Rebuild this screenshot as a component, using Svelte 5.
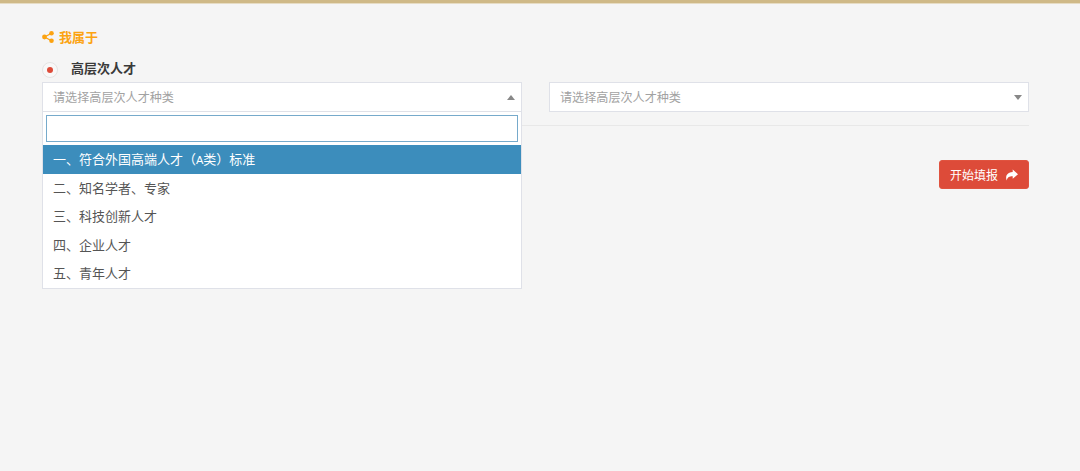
<script>
  const options = ['一、符合外国高端人才（A类）标准', '二、知名学者、专家', '三、科技创新人才', '四、企业人才', '五、青年人才'];
  let active = 0;
</script>

<div class="top-bar"></div>
<main class="page">
  <h4 class="title">
    <svg class="share" viewBox="0 0 12 12" width="12" height="12">
      <circle cx="2.500" cy="6" r="2.400" fill="currentColor" />
      <circle cx="9.500" cy="2.300" r="2.300" fill="currentColor" />
      <circle cx="9.500" cy="9.700" r="2.300" fill="currentColor" />
      <path d="M2.500 6 9.500 2.300M2.500 6l7 3.700" stroke="currentColor" stroke-width="1.300" />
    </svg>
    我属于
  </h4>

  <div class="radio-row">
    <span class="radio"><span class="dot"></span></span>
    <span class="radio-label">高层次人才</span>
  </div>

  <div class="selects">
    <div class="select open">
      <span class="placeholder">请选择高层次人才种类</span>
      <span class="arrow up"></span>
      <div class="dropdown">
        <div class="search"><input type="text" /></div>
        <ul>
          {#each options as option, i}
            {@const parts = option.split('A')}
            <li class:active={i === active}>
              {parts[0]}{#if parts.length > 1}<span class="latin">A</span>{parts[1]}{/if}
            </li>
          {/each}
        </ul>
      </div>
    </div>
    <div class="select">
      <span class="placeholder">请选择高层次人才种类</span>
      <span class="arrow"></span>
    </div>
  </div>

  <div class="divider"></div>

  <div class="actions">
    <button class="start">
      开始填报
      <svg viewBox="0 0 14 12" width="13" height="12">
        <path d="M8.300.2 14 5.100 8.300 10V7.300C5.200 7.200 3 7.900 1.800 11.800 0 6.500 2.900 3 8.300 2.800z" fill="currentColor" />
      </svg>
    </button>
  </div>
</main>

<style>
  :global(body) {
    background: #f5f5f5;
    font-family: "Liberation Sans", "Noto Sans CJK SC", sans-serif;
  }

  .top-bar {
    height: 3px;
    background: #cfb987;
    border-bottom: 1px solid #e6dcc4;
  }

  .page {
    min-height: 467px;
    box-sizing: border-box;
    padding: 24px 51px 0 42px;
  }

  .title {
    display: flex;
    align-items: center;
    gap: 5px;
    margin: 0;
    height: 17px;
    font-size: 13px;
    font-weight: bold;
    color: #fca311;
  }

  .radio-row {
    display: flex;
    align-items: center;
    margin-top: 16px;
    height: 17px;
  }

  .radio {
    display: flex;
    align-items: center;
    justify-content: center;
    width: 14px;
    height: 14px;
    border: 1px solid #e4e4e4;
    border-radius: 50%;
    background: #f8f8f8;
  }

  .dot {
    width: 6px;
    height: 6px;
    border-radius: 50%;
    background: #dd4b39;
  }

  .radio-label {
    margin-left: 13px;
    margin-top: -4px;
    font-size: 13px;
    font-weight: bold;
    color: #3a3a3a;
  }

  .selects {
    display: flex;
    gap: 27px;
    margin-top: 4px;
  }

  .select {
    position: relative;
    flex: 1;
    display: flex;
    align-items: center;
    height: 30px;
    box-sizing: border-box;
    padding: 0 10px 2px;
    background: #fff;
    border: 1px solid #dfe1e8;
    font-size: 12.100px;
  }

  .placeholder {
    color: #a2a2a2;
  }

  .arrow {
    position: absolute;
    right: 6px;
    top: 12px;
    border-left: 4px solid transparent;
    border-right: 4px solid transparent;
    border-top: 5px solid #888;
  }

  .arrow.up {
    border-top: 0;
    border-bottom: 5px solid #888;
  }

  .dropdown {
    position: absolute;
    left: -1px;
    right: -1px;
    top: 28px;
    z-index: 2;
    background: #fff;
    border: 1px solid #dfe1e8;
  }

  .search {
    padding: 3px;
  }

  input {
    display: block;
    width: 100%;
    height: 27px;
    box-sizing: border-box;
    border: 1px solid #76aacb;
    outline: none;
    background: #fff;
  }

  ul {
    list-style: none;
    margin: 0;
    padding: 0;
  }

  li {
    height: 28.500px;
    line-height: 29px;
    padding-left: 10px;
    font-size: 13px;
    color: #555;
  }

  li.active {
    background: #3c8dbc;
    color: #fff;
  }

  .latin {
    font-size: 11px;
  }

  .divider {
    margin-top: 13px;
    border-top: 1px solid #e8e8e8;
  }

  .actions {
    display: flex;
    justify-content: flex-end;
    margin-top: 34px;
  }

  .start {
    display: flex;
    align-items: center;
    gap: 7px;
    height: 29px;
    width: 90px;
    box-sizing: border-box;
    padding: 0 0 0 10px;
    background: #dd4b39;
    border: 1px solid #e0533f;
    border-radius: 3px;
    color: #fff;
    font-family: inherit;
    font-size: 12px;
  }
</style>
